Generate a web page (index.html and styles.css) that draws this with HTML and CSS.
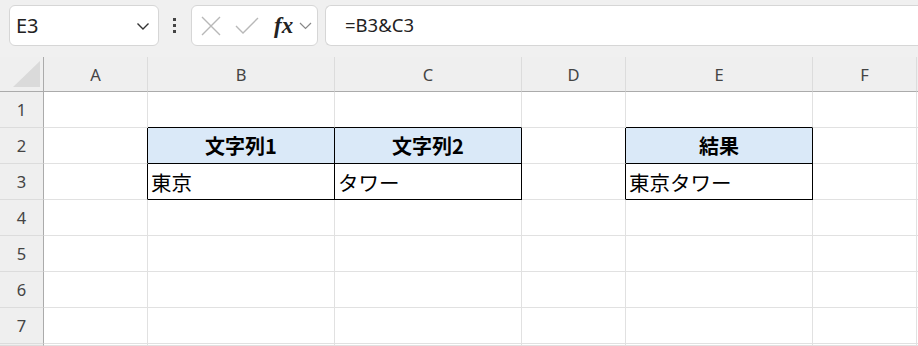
FILE: index.html
```html
<!DOCTYPE html>
<html lang="ja">

<head>
    <meta charset="UTF-8">
    <meta name="viewport" content="width=device-width, initial-scale=1.0">
    <title>文字列の結合</title>
    <link rel="stylesheet" href="styles.css">
</head>

<body>
    <div class="toolbar">
        <div class="namebox">
            <span>E3</span>
            <svg class="chev" width="14" height="10" viewBox="0 0 14 10"><path d="M1.5 2.5 L7 8 L12.5 2.5" fill="none" stroke="#333" stroke-width="1.4"/></svg>
        </div>
        <div class="dots"><i></i><i></i><i></i></div>
        <div class="fxbox">
            <svg width="22" height="22" viewBox="0 0 22 22"><path d="M2 2 L20 20 M20 2 L2 20" stroke="#b8b8b8" stroke-width="1.4" fill="none"/></svg>
            <svg width="26" height="22" viewBox="0 0 26 22"><path d="M2 11 L9 18 L24 3" stroke="#b8b8b8" stroke-width="1.4" fill="none"/></svg>
            <span class="fx">fx</span>
            <svg width="13" height="9" viewBox="0 0 13 9"><path d="M1 2 L6.5 7.5 L12 2" fill="none" stroke="#888" stroke-width="1.2"/></svg>
        </div>
        <div class="formula">=B3&amp;C3</div>
    </div>

    <div class="sheet">
        <div class="corner"><span class="tri"></span></div>
        <div class="colh">A</div>
        <div class="colh">B</div>
        <div class="colh">C</div>
        <div class="colh">D</div>
        <div class="colh">E</div>
        <div class="colh">F</div>
        <div class="colh edge"></div>

        <div class="rowh">1</div>
        <div class="cell"></div>
        <div class="cell bb"></div>
        <div class="cell bb"></div>
        <div class="cell"></div>
        <div class="cell bb"></div>
        <div class="cell"></div>
        <div class="cell edge"></div>

        <div class="rowh">2</div>
        <div class="cell br"></div>
        <div class="cell head">文字列1</div>
        <div class="cell head">文字列2</div>
        <div class="cell br"></div>
        <div class="cell head">結果</div>
        <div class="cell"></div>
        <div class="cell edge"></div>

        <div class="rowh">3</div>
        <div class="cell br"></div>
        <div class="cell data">東京</div>
        <div class="cell data">タワー</div>
        <div class="cell br"></div>
        <div class="cell data">東京タワー</div>
        <div class="cell"></div>
        <div class="cell edge"></div>

        <div class="rowh">4</div>
        <div class="cell"></div>
        <div class="cell"></div>
        <div class="cell"></div>
        <div class="cell"></div>
        <div class="cell"></div>
        <div class="cell"></div>
        <div class="cell edge"></div>

        <div class="rowh">5</div>
        <div class="cell"></div>
        <div class="cell"></div>
        <div class="cell"></div>
        <div class="cell"></div>
        <div class="cell"></div>
        <div class="cell"></div>
        <div class="cell edge"></div>

        <div class="rowh">6</div>
        <div class="cell"></div>
        <div class="cell"></div>
        <div class="cell"></div>
        <div class="cell"></div>
        <div class="cell"></div>
        <div class="cell"></div>
        <div class="cell edge"></div>

        <div class="rowh">7</div>
        <div class="cell"></div>
        <div class="cell"></div>
        <div class="cell"></div>
        <div class="cell"></div>
        <div class="cell"></div>
        <div class="cell"></div>
        <div class="cell edge"></div>

        <div class="rowh"></div>
        <div class="cell"></div>
        <div class="cell"></div>
        <div class="cell"></div>
        <div class="cell"></div>
        <div class="cell"></div>
        <div class="cell"></div>
        <div class="cell edge"></div>
    </div>
</body>

</html>
```

FILE: styles.css
```css
* {
    box-sizing: border-box;
}

body {
    margin: 0;
    padding: 0;
    width: 918px;
    height: 346px;
    overflow: hidden;
    background-color: #fff;
    font-family: "Noto Sans", "Noto Sans CJK JP", sans-serif;
}

.toolbar {
    display: flex;
    align-items: center;
    height: 57px;
    padding: 5px 0 11px 9px;
    background-color: #f0f0f0;
}

.namebox {
    display: flex;
    align-items: center;
    justify-content: space-between;
    width: 150px;
    height: 41px;
    padding: 0 8px 0 6px;
    background-color: #fff;
    border: 1px solid #d6d6d6;
    border-radius: 6px;
    font-size: 20px;
    color: #222;
}

.dots {
    display: flex;
    flex-direction: column;
    gap: 3px;
    margin: 0 15px 0 14px;
}

.dots i {
    display: block;
    width: 3px;
    height: 3px;
    background-color: #444;
}

.fxbox {
    display: flex;
    align-items: center;
    gap: 10px;
    width: 127px;
    height: 41px;
    padding: 0 0 0 8px;
    background-color: #fff;
    border: 1px solid #d6d6d6;
    border-radius: 6px;
}

.fxbox svg:nth-child(2) {
    margin-left: 2px;
}

.fx {
    font-family: "Liberation Serif", serif;
    font-style: italic;
    font-weight: bold;
    font-size: 23px;
    color: #222;
    margin-left: 4px;
    margin-right: -4px;
}

.formula {
    flex: 1;
    height: 41px;
    margin-left: 7px;
    padding: 6px 0 0 19px;
    background-color: #fff;
    border: 1px solid #d6d6d6;
    border-right: none;
    border-radius: 6px 0 0 6px;
    font-size: 18.5px;
    color: #222;
}

.sheet {
    display: grid;
    grid-template-columns: 44px 104px 187px 187px 104px 187px 104px 1px;
    grid-template-rows: 35px repeat(7, 36px) 2px;
}

.corner {
    position: relative;
    background-color: #efefef;
    border-right: 1px solid #ababab;
    border-bottom: 1px solid #ababab;
}

.tri {
    position: absolute;
    right: 3px;
    bottom: 4px;
    width: 0;
    height: 0;
    border-left: 27px solid transparent;
    border-bottom: 26px solid #dadada;
}

.colh {
    display: flex;
    align-items: center;
    justify-content: center;
    background-color: #efefef;
    border-right: 1px solid #dcdcdc;
    border-bottom: 1px solid #ababab;
    font-size: 16.5px;
    color: #444;
}

.rowh {
    display: flex;
    align-items: center;
    justify-content: center;
    background-color: #efefef;
    border-right: 1px solid #ababab;
    border-bottom: 1px solid #dcdcdc;
    font-size: 16.5px;
    color: #444;
}

.cell {
    display: flex;
    align-items: center;
    border-right: 1px solid #e1e1e1;
    border-bottom: 1px solid #e1e1e1;
    font-family: "Noto Sans CJK JP", sans-serif;
    font-size: 20.5px;
    color: #000;
}

.edge {
    border-right: none;
}

.br {
    border-right-color: #000;
}

.bb {
    border-bottom-color: #000;
}

.head {
    justify-content: center;
    background-color: #dae9f8;
    border-right-color: #000;
    border-bottom-color: #000;
    font-size: 20px;
    font-weight: bold;
}

.data {
    padding-left: 3px;
    border-right-color: #000;
    border-bottom-color: #000;
}
```
